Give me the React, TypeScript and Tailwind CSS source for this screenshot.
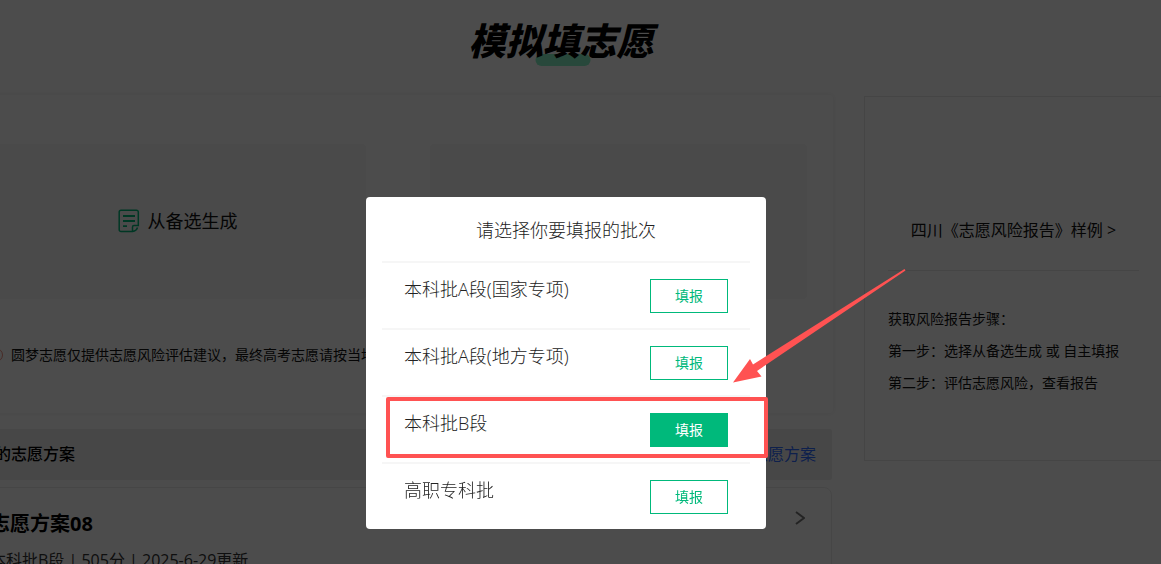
import React from 'react';

type Batch = {
  name: string;
  active?: boolean;
};

const batches: Batch[] = [
  { name: '本科批A段(国家专项)' },
  { name: '本科批A段(地方专项)' },
  { name: '本科批B段', active: true },
  { name: '高职专科批' },
];

const NoteIcon = () => (
  <svg className="h-6 w-[22px]" viewBox="0 0 22 24" fill="none" stroke="#00b97b" strokeWidth="1.5" aria-hidden="true">
    <path d="M14.500 22.500H3A1.800 1.800 0 0 1 1.200 20.700V3A1.800 1.800 0 0 1 3 1.200H18.500A1.800 1.800 0 0 1 20.300 3V16.500H16A1.500 1.500 0 0 0 14.500 18V22.500Q18.500 22 19.500 18.500" />
    <path d="M5 7H17M5 12H17M5 17.200H9" strokeWidth="1.800" />
  </svg>
);

const InfoIcon = () => (
  <svg className="h-[14px] w-[14px] shrink-0" viewBox="0 0 14 14" fill="none" stroke="#f08c7d" aria-hidden="true">
    <circle cx="7" cy="7" r="6.5" />
    <path d="M7 3.500V8M7 9.500V10.500" />
  </svg>
);

const ArrowMark = () => (
  <svg className="absolute left-[366px] top-[71px] h-[116px] w-[174px]" viewBox="0 0 174 116" fill="#ff5252" aria-hidden="true">
    <path d="M1 114.500L18 91L21 96.500L172.500 1L173.500 2.500L25 103L29.500 108.500Z" />
  </svg>
);

const BatchDialog = () => (
  <div className="fixed inset-0 flex items-start justify-center bg-black/70 pr-[29px] pt-[197px]">
    <div role="dialog" aria-labelledby="batch-title" className="relative w-[400px] rounded-[4px] bg-white px-4 text-[#222]">
      <h2 id="batch-title" className="pb-[19px] pt-[21px] text-center text-lg font-light leading-6">请选择你要填报的批次</h2>
      <ul>
        {batches.map((batch) => (
          <li key={batch.name} className="relative flex items-start justify-between border-t-2 border-[#f6f6f6] px-[22px] pb-[15px] pt-4">
            <span className="text-lg font-light leading-5">{batch.name}</span>
            <button
              type="button"
              className={
                batch.active
                  ? 'h-[34px] w-[78px] border border-[#00b97b] bg-[#00b97b] text-sm text-white'
                  : 'h-[34px] w-[78px] border border-[#00b97b] bg-white text-sm text-[#00b97b]'
              }
            >
              填报
            </button>
            {batch.active && (
              <div className="pointer-events-none absolute -right-[18px] bottom-1 left-1 top-0 rounded-[2px] border-4 border-[#ff5252]" />
            )}
          </li>
        ))}
      </ul>
      <ArrowMark />
    </div>
  </div>
);

const App = () => {
  return (
    <div className="h-screen overflow-hidden bg-white font-['Open_Sans','Noto_Sans_CJK_SC',sans-serif] text-[#111]">
      <div className="-ml-[37px] -mr-[2px]">
        <header className="flex h-[95px] justify-center pt-[18px]">
          <h1 className="relative h-12 pr-1 text-[37px] font-black italic leading-[46px] text-black">
            <span className="absolute bottom-0 left-1/2 h-3 w-[55px] -translate-x-1/2 rounded-full bg-[#85f0c5]" />
            <span className="relative">模拟填志愿</span>
          </h1>
        </header>

        <main className="flex items-start gap-[31px]">
          <div className="min-w-0 flex-1">
            <section className="h-[318px] rounded-[4px] px-[26px] pt-[49px] shadow-[0_0_6px_rgba(0,0,0,0.08)]">
              <div className="grid grid-cols-2 gap-16">
                <button type="button" className="flex h-[155px] items-center justify-center gap-2 rounded-[4px] bg-[#f7f7f7] pb-[2px] text-lg">
                  <NoteIcon />
                  从备选生成
                </button>
                <div className="h-[155px] rounded-[4px] bg-[#f7f7f7]" />
              </div>
              <p className="mt-[46px] flex items-center gap-2 whitespace-nowrap text-sm leading-5">
                <InfoIcon />
                圆梦志愿仅提供志愿风险评估建议，最终高考志愿请按当地
              </p>
            </section>

            <div className="mr-px mt-4 flex h-[51px] items-center justify-between rounded-[2px] bg-[#efefef] px-4 pb-[2px] text-base">
              <h2 className="font-medium text-black">我的志愿方案</h2>
              <a href="#plans" className="text-[#2f6bff]">志愿方案</a>
            </div>

            <section className="mr-px mt-[7px] flex justify-between rounded-lg border border-[#ececec] px-[26px] pb-6 pt-[22px]">
              <div>
                <h3 className="text-xl font-bold leading-7 text-black">志愿方案08</h3>
                <p className="mt-[10px] text-base leading-6 text-[#333]">本科批B段 | 505分 | 2025-6-29更新</p>
              </div>
              <svg className="h-4 w-[10px]" viewBox="0 0 10 16" fill="none" stroke="#777" strokeWidth="2" aria-hidden="true">
                <path d="M1 2L9 8L1 14" />
              </svg>
            </section>
          </div>

          <aside className="mt-px h-[365px] w-[299px] border border-[#e6e6e6] px-[23px] pt-[121px]">
            <a href="#sample" className="block border-b border-[#e6e6e6] pb-7 text-center text-base leading-6">
              四川《志愿风险报告》样例 &gt;
            </a>
            <div className="mt-8 text-sm leading-8">
              <p>获取风险报告步骤：</p>
              <p>第一步：选择从备选生成 或 自主填报</p>
              <p>第二步：评估志愿风险，查看报告</p>
            </div>
          </aside>
        </main>
      </div>
      <BatchDialog />
    </div>
  );
};

export default App;
